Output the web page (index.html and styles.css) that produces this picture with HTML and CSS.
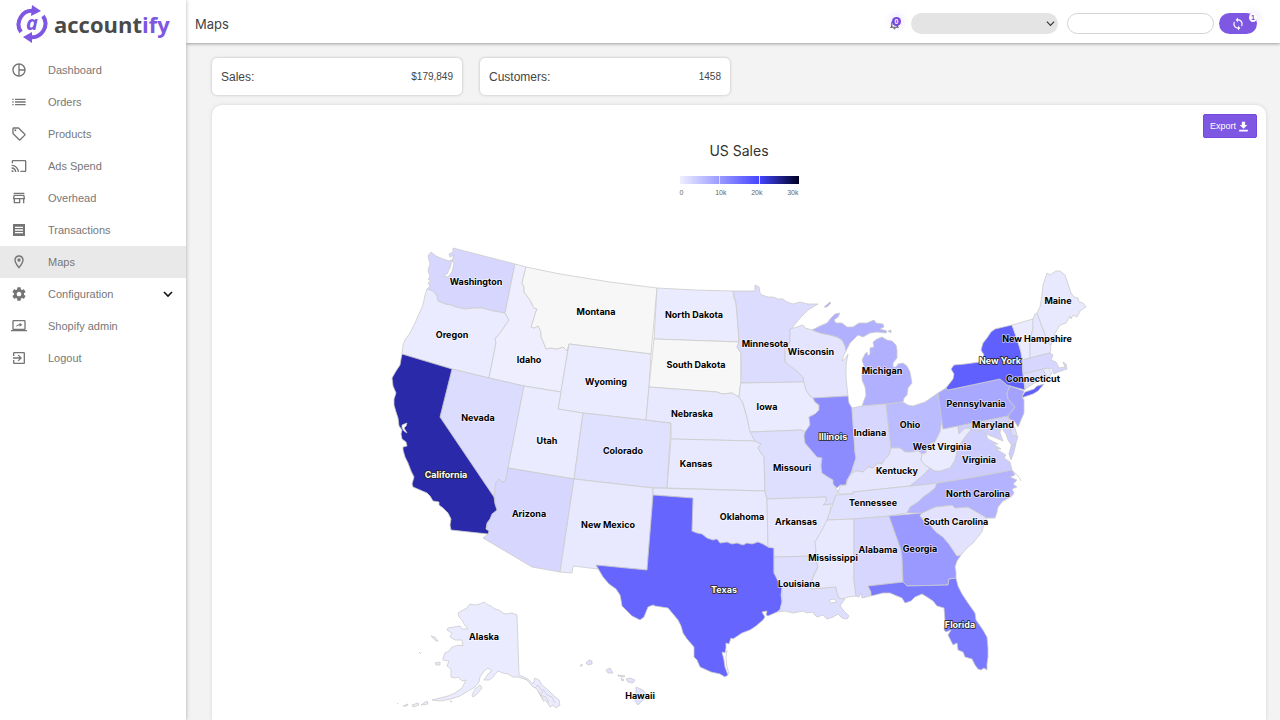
FILE: index.html
```html
<!DOCTYPE html>
<html lang="en">
<head>
    <meta charset="UTF-8" />
    <meta name="viewport" content="width=device-width, initial-scale=1.0" />
    <title>Accountify - Maps</title>
    <link rel="stylesheet" href="styles.css">
</head>
<body>
    <div class="app">
        <aside class="sidebar">
            <a class="logo" href="#">
                <svg class="logo-mark" viewBox="0 0 32 40">
                    <path class="logo-arc" d="M5 28A13.5 13.5 0 0 1 18 7M27 12A13.5 13.5 0 0 1 14 33" />
                    <path d="M16 1L25 7L15 12ZM16 28L7 33L16 39Z" />
                    <text x="16" y="26">a</text>
                </svg>
                <span class="logo-text">account<span>ify</span></span>
            </a>
            <nav class="menu">
                <a href="#"><svg viewBox="0 0 24 24"><path d="M12 2C6.48 2 2 6.48 2 12s4.48 10 10 10 10-4.48 10-10S17.52 2 12 2zm1 2.07c3.61.45 6.48 3.33 6.93 6.93H13V4.07zM4 12c0-4.06 3.07-7.44 7-7.93v15.87c-3.93-.5-7-3.88-7-7.94zm9 7.93V13h6.93c-.45 3.61-3.32 6.48-6.93 6.93z" /></svg>Dashboard</a>
                <a href="#"><svg viewBox="0 0 24 24"><path d="M2 13h2v-2H2v2zm0 4h2v-2H2v2zm0-8h2V7H2v2zm4 4h16v-2H6v2zm0 4h16v-2H6v2zM6 7v2h16V7H6z" /></svg>Orders</a>
                <a href="#"><svg viewBox="0 0 24 24"><path d="M21.41 11.58l-9-9C12.05 2.22 11.55 2 11 2H4c-1.1 0-2 .9-2 2v7c0 .55.22 1.05.59 1.42l9 9c.36.36.86.58 1.41.58s1.05-.22 1.41-.59l7-7c.37-.36.59-.86.59-1.41s-.23-1.06-.59-1.42zM13 20.01L4 11V4h7l9 9-7 7.01z" /><circle cx="6.5" cy="6.5" r="1.5" /></svg>Products</a>
                <a href="#"><svg viewBox="0 0 24 24"><path d="M21 3H3c-1.1 0-2 .9-2 2v3h2V5h18v14h-7v2h7c1.1 0 2-.9 2-2V5c0-1.1-.9-2-2-2zM1 18v3h3c0-1.66-1.34-3-3-3zm0-4v2c2.76 0 5 2.24 5 5h2c0-3.87-3.13-7-7-7zm0-4v2c4.97 0 9 4.03 9 9h2c0-6.08-4.93-11-11-11z" /></svg>Ads Spend</a>
                <a href="#"><svg viewBox="0 0 24 24"><path d="M18.36 9l.6 3H5.04l.6-3h12.72M20 4H4v2h16V4zm0 3H4l-1 5v2h1v6h10v-6h4v6h2v-6h1v-2l-1-5zM6 18v-4h6v4H6z" /></svg>Overhead</a>
                <a href="#"><svg viewBox="0 0 24 24"><path fill-rule="evenodd" d="M3 3h18v18H3zM6 7v2h12V7zM6 11v2h12v-2zM6 15v2h12v-2z" /></svg>Transactions</a>
                <a href="#" class="active"><svg viewBox="0 0 24 24"><path d="M12 2C8.13 2 5 5.13 5 9c0 5.25 7 13 7 13s7-7.75 7-13c0-3.87-3.13-7-7-7zM7 9c0-2.76 2.24-5 5-5s5 2.24 5 5c0 2.88-2.88 7.19-5 9.88C9.92 16.21 7 11.85 7 9z" /><circle cx="12" cy="9" r="2.5" /></svg>Maps</a>
                <a href="#"><svg viewBox="0 0 24 24"><path d="M19.43 12.98c.04-.32.07-.64.07-.98s-.03-.66-.07-.98l2.11-1.65c.19-.15.24-.42.12-.64l-2-3.46c-.12-.22-.39-.3-.61-.22l-2.49 1c-.52-.4-1.08-.73-1.69-.98l-.38-2.65C14.46 2.18 14.25 2 14 2h-4c-.25 0-.46.18-.49.42l-.38 2.65c-.61.25-1.17.59-1.69.98l-2.49-1c-.23-.09-.49 0-.61.22l-2 3.46c-.13.22-.07.49.12.64l2.11 1.65c-.04.32-.07.65-.07.98s.03.66.07.98l-2.11 1.65c-.19.15-.24.42-.12.64l2 3.46c.12.22.39.3.61.22l2.49-1c.52.4 1.08.73 1.69.98l.38 2.65c.03.24.24.42.49.42h4c.25 0 .46-.18.49-.42l.38-2.65c.61-.25 1.17-.59 1.69-.98l2.49 1c.23.09.49 0 .61-.22l2-3.46c.12-.22.07-.49-.12-.64l-2.11-1.65zM12 15.5c-1.93 0-3.5-1.57-3.5-3.5s1.57-3.5 3.5-3.5 3.5 1.57 3.5 3.5-1.57 3.5-3.5 3.5z" /></svg>Configuration<svg class="chevron" viewBox="0 0 10 10"><path d="M1 3l4 4 4-4" /></svg></a>
                <a href="#"><svg viewBox="0 0 24 24"><path d="M20 18c1.1 0 2-.9 2-2V5c0-1.1-.9-2-2-2H4c-1.1 0-2 .9-2 2v11c0 1.1.9 2 2 2H0v2h24v-2h-4zM4 5h16v11H4V5zM13 7v2c-3.9.5-5.4 3.2-6 5 1.4-1.9 3.2-2.7 6-2.7v2l4-3.2z" /></svg>Shopify admin</a>
                <a href="#"><svg viewBox="0 0 24 24"><path d="M10.09 15.59L11.5 17l5-5-5-5-1.41 1.41L12.67 11H3v2h9.67l-2.58 2.59zM19 3H5c-1.11 0-2 .9-2 2v4h2V5h14v14H5v-4H3v4c0 1.1.89 2 2 2h14c1.1 0 2-.9 2-2V5c0-1.1-.9-2-2-2z" /></svg>Logout</a>
            </nav>
        </aside>

        <div class="page">
            <header class="topbar">
                <h1>Maps</h1>
                <button class="bell" aria-label="Notifications">
                    <svg viewBox="0 0 24 24"><path d="M12 22c1.1 0 2-.9 2-2h-4c0 1.1.9 2 2 2zm6-6v-5c0-3.07-1.63-5.64-4.5-6.32V4c0-.83-.67-1.5-1.5-1.5s-1.5.67-1.5 1.5v.68C7.64 5.36 6 7.92 6 11v5l-2 2v1h16v-1l-2-2zm-2 1H8v-6c0-2.48 1.51-4.5 4-4.5s4 2.02 4 4.5v6z" /></svg>
                    <span class="badge">0</span>
                </button>
                <div class="select-wrap">
                    <select aria-label="Store"><option></option></select>
                    <svg viewBox="0 0 10 10"><path d="M1 3l4 4 4-4" /></svg>
                </div>
                <input class="dates" type="text" aria-label="Date range">
                <button class="sync" aria-label="Sync">
                    <svg viewBox="0 0 24 24"><path d="M12 4V1L8 5l4 4V6c3.31 0 6 2.69 6 6 0 1.01-.25 1.97-.7 2.8l1.46 1.46C19.54 15.03 20 13.57 20 12c0-4.42-3.58-8-8-8zm0 14c-3.31 0-6-2.69-6-6 0-1.01.25-1.97.7-2.8L5.24 7.74C4.46 8.97 4 10.43 4 12c0 4.42 3.58 8 8 8v3l4-4-4-4v3z" /></svg>
                    <span class="badge light">1</span>
                </button>
            </header>

            <main class="content">
                <div class="stats">
                    <div class="stat"><span>Sales:</span><b>$179,849</b></div>
                    <div class="stat"><span>Customers:</span><b>1458</b></div>
                </div>

                <section class="card">
                    <button class="export">Export
                        <svg viewBox="0 0 24 24"><path d="M19 9h-4V3H9v6H5l7 7 7-7zM4 18v3h16v-3H4z" /></svg>
                    </button>
                    <h2>US Sales</h2>
                    <div class="legend">
                        <div class="legend-bar"><i></i><i></i><i></i></div>
                        <div class="legend-labels"><span>0</span><span>10k</span><span>20k</span><span>30k</span></div>
                    </div>

                    <svg class="map" viewBox="212 200 1054 515" role="img" aria-label="Sales by state">
                        <g class="states">
                            <!-- west -->
                            <path fill="#d6d6ff" d="M453 248L484 256L515 264L510 289L505 313L493 311L482 308L473 308L465 309L456 307L451 305L445 304L438 301L437 296L433 291L427 289L430 286L428 283L431 281L428 279L430 277L428 270L430 264L428 256L431 252L436 256L443 259L449 261L452 260L450 268L447 274L443 276L448 277L452 272L454 263L452 261L454 255L450 257L449 254L453 252Z" />
                            <path fill="#ebebff" d="M427 289L433 291L437 296L438 301L445 304L451 305L456 307L465 309L473 308L482 308L493 311L505 313L509 320L500 333L495 339L496 343L489 378L452 369L402 354L403 345L405 340L410 333L415 323L419 314L423 305L425 295Z" />
                            <path fill="#eeeeff" d="M515 264L526 267L522 283L524 287L524 292L530 300L534 308L537 309L535 314L534 318L531 327L534 328L538 326L541 332L541 337L543 341L546 349L550 348L557 349L563 347L567 351L569 344L561 392L524 386L489 378L496 343L495 339L500 333L509 320L505 313Z" />
                            <path fill="#f7f7f7" d="M526 267L560 274L610 282L657 288L651 354L569 344L567 351L563 347L557 349L550 348L546 349L543 341L541 337L541 332L538 326L534 328L531 327L534 318L535 314L537 309L534 308L530 300L524 292L524 287L522 283Z" />
                            <path fill="#ebebff" d="M569 344L651 354L649 387L646 420L583 413L558 409Z" />
                            <path fill="#dcdcff" d="M452 369L489 378L524 386L508 468L507 475L505 482L502 482L499 479L496 482L494 497L440 417Z" />
                            <path fill="#ebebff" d="M524 386L561 392L558 409L583 413L574 479L508 468Z" />
                            <path fill="#d6d6ff" d="M508 468L574 479L560 572L532 567L483 538L488 534L487 523L492 514L497 510L494 497L496 482L499 479L502 482L505 482L507 475Z" />
                            <path fill="#e0e0ff" d="M583 413L646 420L671 423L667 488L653 488L574 479Z" />
                            <path fill="#e8e8ff" d="M574 479L653 488L653 495L647 570L596 565L598 569L573 566L572 573L560 572Z" />
                            <path fill="#2929a9" d="M402 354L452 369L440 417L494 497L495 504L497 510L492 514L490 519L487 523L486 529L489 531L488 534L451 530L450 525L451 519L448 513L443 508L439 505L439 502L433 501L430 496L427 493L420 490L413 487L412 484L414 477L411 471L408 463L405 457L403 450L403 447L407 446L406 442L402 439L401 434L402 430L399 426L398 418L396 412L394 405L394 399L396 393L393 386L392 378L396 371L400 365L401 359Z" />
                            <path class="water" d="M402 425L407 423L406 426L404 428L407 433L404 431L402 428Z" />
                            <!-- plains -->
                            <path fill="#ebebff" d="M657 288L695 290L733 291L734 299L736 303L737 315L738 327L739 342L654 339Z" />
                            <path fill="#f7f7f7" d="M654 339L739 342L737 347L741 353L741 383L740 387L739 397L732 393L722 394L717 392L649 387Z" />
                            <path fill="#e8e8ff" d="M649 387L717 392L722 394L732 393L739 397L743 403L745 411L747 417L749 427L752 435L755 441L671 439L671 423L646 420Z" />
                            <path fill="#e8e8ff" d="M671 439L755 441L761 444L758 448L761 453L764 457L765 491L667 488Z" />
                            <path fill="#e8e8ff" d="M653 488L765 491L767 499L768 547L763 544L758 542L752 544L747 543L743 545L737 543L732 544L727 542L720 543L717 539L713 540L707 538L702 534L697 533L692 531L693 498L653 495Z" />
                            <path fill="#6666ff" d="M653 495L693 498L692 531L697 533L702 534L707 538L713 540L717 539L720 543L727 542L732 544L737 543L743 545L747 543L752 544L758 542L763 544L768 547L774 548L774 573L778 578L779 583L782 588L781 595L782 602L780 610L777 612L768 616L766 615L767 611L762 612L765 617L763 620L756 626L750 630L742 633L733 639L731 638L729 644L726 643L726 648L725 653L722 652L724 660L725 667L728 675L725 677L720 674L711 672L700 667L697 660L694 657L694 647L687 639L683 633L681 626L678 620L673 614L668 608L655 606L653 605L648 607L644 617L640 620L632 616L622 606L621 600L620 595L616 589L609 584L603 577L596 565L647 570Z" />
                            <path class="thin" d="M727 650L726 658L727 667L729 674" />
                            <path fill="#dcdcff" d="M733 291L755 291L755 285L759 287L760 293L762 295L768 297L773 297L778 299L783 299L787 302L793 304L800 302L808 304L818 304L808 310L800 318L792 328L790 329L790 343L785 348L785 362L791 366L798 372L803 377L804 382L741 383L741 353L737 347L739 342L738 327L736 303Z" />
                            <path fill="#ebebff" d="M741 383L804 382L806 390L810 396L813 398L815 402L819 405L819 410L815 414L809 417L810 425L805 432L802 430L750 432L749 427L747 417L743 403L739 397L740 387Z" />
                            <path fill="#dedeff" d="M750 432L802 430L805 434L805 443L811 450L817 457L822 458L821 466L822 473L828 477L833 480L835 487L838 491L836 495L834 499L833 504L823 505L826 502L826 497L767 499L765 491L764 457L761 453L758 448L761 444L755 441Z" />
                            <path fill="#e6e6ff" d="M767 499L826 497L826 502L823 505L831 504L830 512L827 520L825 525L822 530L819 537L815 542L816 550L815 556L774 557L774 548L768 547Z" />
                            <path fill="#dedeff" d="M774 557L815 556L818 567L814 574L812 580L811 589L836 587L837 593L839 598L845 599L842 603L840 606L844 611L849 616L847 619L842 618L838 614L833 617L827 619L823 615L817 617L812 612L807 613L803 611L793 613L785 611L777 612L780 610L782 602L782 588L779 583L774 573Z" />
                            <path class="water" d="M829 600L834 599L837 602L831 603Z" />
                            <!-- great lakes -->
                            <path fill="#e4e4ff" d="M790 329L797 327L803 325L805 328L812 330L820 333L830 335L837 337L842 340L845 346L846 351L843 357L842 361L845 359L848 354L846 365L846 377L847 387L848 396L813 398L810 396L806 390L804 382L803 377L798 372L785 362L785 348L790 343Z" />
                            <path fill="#b0b0ff" d="M812 330L820 326L827 323L831 318L835 314L840 313L838 317L834 320L836 323L842 323L847 327L853 327L859 323L867 323L874 320L876 323L883 324L884 327L880 329L887 331L886 333L877 332L870 333L863 337L858 335L853 340L850 343L846 351L845 346L842 340L837 337L830 335L820 333Z" />
                            <path fill="#b0b0ff" d="M824 307L830 302L831 303L827 307ZM888 331L891 330L891 333Z" />
                            <path fill="#b0b0ff" d="M862 406L866 395L865 387L862 380L862 373L864 366L862 360L865 354L867 352L868 356L870 354L870 348L874 347L873 342L877 339L882 337L887 340L892 341L896 345L897 350L897 358L893 363L893 367L896 367L898 364L903 363L907 366L910 372L912 383L908 388L907 395L904 398L903 402L886 404Z" />
                            <path fill="#8c8cff" d="M813 398L848 396L849 403L852 408L855 452L856 458L853 467L851 473L847 480L846 485L840 485L837 488L833 484L833 480L828 477L822 473L821 466L822 458L817 457L811 450L805 443L804 436L805 432L810 425L809 417L815 414L819 410L819 405L815 402Z" />
                            <path fill="#d6d6ff" d="M852 408L862 406L886 404L891 448L889 455L885 459L882 464L878 463L873 468L868 467L863 472L857 471L852 473L853 467L856 458L855 452Z" />
                            <path fill="#bbbbff" d="M886 404L903 402L908 405L913 406L925 402L938 393L943 420L943 425L940 432L935 442L931 443L927 447L926 453L922 454L918 451L912 452L905 452L900 448L891 448Z" />
                            <!-- south -->
                            <path fill="#e6e6ff" d="M838 494L840 486L846 485L848 479L852 473L857 471L863 472L868 467L873 468L878 463L882 464L885 459L889 455L891 448L900 448L905 452L912 452L918 451L922 454L921 460L925 465L930 468L921 477L910 486L853 492L853 494Z" />
                            <path fill="#e0e0ff" d="M836 495L853 494L853 492L910 486L937 483L935 488L929 493L923 497L918 502L910 507L907 513L889 516L854 519L827 520L830 512Z" />
                            <path fill="#e8e8ff" d="M827 520L854 519L854 580L856 596L848 597L842 599L839 598L837 593L836 587L811 589L812 580L818 567L815 556L816 550L815 542L822 530Z" />
                            <path fill="#d6d6ff" d="M854 519L889 516L901 550L902 557L902 570L903 582L868 586L871 592L870 596L862 598L861 593L859 597L856 596L854 580Z" />
                            <path fill="#9999ff" d="M889 516L922 513L920 516L924 521L930 525L936 532L943 537L949 544L953 550L957 556L961 555L957 561L955 567L956 572L956 578L949 579L948 585L907 586L903 582L902 557L901 550Z" />
                            <path fill="#7a7aff" d="M868 586L903 582L907 586L948 585L949 579L956 578L958 586L962 594L968 603L975 613L976 620L983 630L987 637L988 648L988 657L987 664L987 670L984 668L981 670L978 669L975 665L972 659L965 657L963 652L958 650L957 643L953 645L948 635L951 630L946 632L944 630L945 621L944 608L937 606L933 601L927 597L922 594L915 597L911 601L905 603L902 598L897 596L890 593L883 593L871 596L871 592Z" />
                            <path fill="#e2e2ff" d="M922 513L935 507L952 505L955 508L968 507L987 518L984 524L982 532L977 538L973 543L967 548L961 555L957 556L953 550L949 544L943 537L936 532L930 525L920 516Z" />
                            <path fill="#b3b3ff" d="M937 483L975 477L1012 470L1015 475L1010 477L1017 480L1013 484L1017 487L1012 489L1014 493L1011 497L1003 501L998 507L997 512L995 518L987 518L968 507L955 508L952 505L935 507L922 513L907 513L910 507L918 502L923 497L929 493L935 488Z" />
                            <path fill="#ccccff" d="M972 428L976 432L981 430L986 434L988 439L998 444L993 444L1001 449L996 449L1006 455L1004 458L1010 462L1012 470L975 477L937 483L910 486L921 477L930 468L935 471L940 471L950 468L955 460L958 447L965 437Z" />
                            <path fill="#ebebff" d="M942 420L943 429L958 426L959 434L965 428L972 428L965 437L958 447L955 460L950 468L940 471L935 471L930 468L925 465L921 460L922 454L926 453L927 447L931 443L935 442L940 432Z" />
                            <path fill="#d0d0ff" d="M958 426L1008 416L1012 436L1018 436L1016 443L1012 446L1008 440L1006 434L1003 430L1005 423L1001 427L1000 433L1003 441L996 438L986 434L981 430L976 432L972 428L965 428L959 434Z" />
                            <path fill="#ccccff" d="M1011 446L1016 443L1014 452L1011 460L1009 454Z" />
                            <path class="thin" d="M1013 471L1019 477L1021 481" />
                            <!-- northeast -->
                            <path fill="#a8a8ff" d="M938 393L946 388L948 390L1000 379L1007 385L1010 386L1007 393L1008 399L1015 407L1008 416L943 429Z" />
                            <path fill="#6060ff" d="M946 388L953 379L954 374L951 369L954 365L965 364L980 362L984 355L981 350L983 343L987 338L991 332L995 329L1012 325L1015 333L1018 342L1021 352L1022 360L1023 373L1025 390L1010 386L1007 385L1000 379L948 390Z" />
                            <path fill="#6060ff" d="M1021 398L1025 392L1034 389L1037 386L1044 384L1038 391L1033 394Z" />
                            <path fill="#a3a3ff" d="M1010 386L1024 391L1022 397L1024 400L1024 413L1021 420L1018 427L1015 422L1009 419L1008 416L1015 407L1008 399L1007 393Z" />
                            <path fill="#dcdcff" d="M1008 416L1010 421L1015 428L1017 435L1012 436Z" />
                            <path fill="#ebebff" d="M1012 325L1033 319L1033 328L1030 340L1030 358L1022 360L1021 352L1018 342Z" />
                            <path fill="#e6e6ff" d="M1033 319L1035 314L1037 313L1047 340L1051 347L1050 353L1030 358L1030 340L1033 328Z" />
                            <path fill="#e8e8ff" d="M1037 313L1040 307L1042 295L1043 285L1047 273L1050 275L1056 271L1060 271L1065 275L1071 293L1074 297L1078 298L1079 302L1083 303L1086 307L1080 311L1077 317L1073 315L1071 319L1070 316L1066 323L1060 325L1055 333L1051 345L1047 340Z" />
                            <path fill="#d6d6ff" d="M1022 360L1030 358L1050 353L1053 355L1051 360L1056 362L1059 368L1065 367L1063 362L1066 364L1067 369L1058 372L1054 374L1052 369L1048 368L1023 374Z" />
                            <path fill="#dcdcff" d="M1023 374L1043 369L1046 376L1033 384L1025 389Z" />
                            <path fill="#e8e8ff" d="M1043 369L1048 368L1052 373L1049 377L1046 376Z" />
                            <!-- alaska and hawaii -->
                            <path fill="#ebebff" d="M484 602L480 604L475 605L470 604L467 608L463 610L458 613L459 617L462 620L464 624L468 629L462 629L460 626L448 628L447 630L452 633L450 637L455 640L462 640L463 646L459 645L452 647L449 651L445 653L443 658L443 660L449 661L447 666L451 669L451 677L455 678L458 677L462 681L466 680L462 688L455 693L448 696L440 698L432 700L440 701L451 699L460 696L468 691L475 687L479 682L480 677L484 671L488 668L492 671L488 674L484 680L489 680L492 678L498 671L503 673L508 674L513 677L518 677L527 680L532 686L537 689L542 698L547 702L550 707L553 705L556 708L560 705L559 700L552 694L548 690L542 685L539 680L535 678L533 684L529 680L524 677L519 675L517 615L512 613L506 614L503 613L499 610L495 609L491 606L488 605Z" />
                            <path fill="#ebebff" d="M472 695L475 689L480 685L482 688L477 694L473 697ZM435 663L440 662L440 665L436 665ZM431 636L435 637L438 641L436 641ZM421 705L427 701L428 704ZM412 705L418 703L419 705L413 707ZM403 706L408 704L407 706ZM397 703L398 704ZM419 652L421 654ZM450 701L452 702Z" />
                            <path class="thin" d="M535 688L538 685L543 692L540 695L546 697L549 703M543 689L547 695L552 697L555 703M538 691L544 702" />
                            <path fill="#e0e0ff" d="M580 666L582 664L582 666ZM586 663L589 660L592 661L592 664L588 665ZM606 670L610 668L613 673L608 673ZM618 675L625 676L624 677L618 676ZM621 678L624 680L622 681ZM626 679L630 678L635 680L633 683L628 682ZM636 687L643 690L647 695L643 700L638 705L635 701L636 695Z" />
                        </g>

                        <g class="labels">
                            <text x="476" y="285">Washington</text>
                            <text x="452" y="338">Oregon</text>
                            <text x="529" y="363">Idaho</text>
                            <text x="596" y="315">Montana</text>
                            <text x="606" y="385">Wyoming</text>
                            <text class="on-dark" x="446" y="478">California</text>
                            <text x="478" y="421">Nevada</text>
                            <text x="547" y="444">Utah</text>
                            <text x="529" y="517">Arizona</text>
                            <text x="608" y="528">New Mexico</text>
                            <text x="623" y="454">Colorado</text>
                            <text x="694" y="318">North Dakota</text>
                            <text x="696" y="368">South Dakota</text>
                            <text x="692" y="417">Nebraska</text>
                            <text x="696" y="467">Kansas</text>
                            <text x="742" y="520">Oklahoma</text>
                            <text class="on-dark" x="724" y="593">Texas</text>
                            <text x="765" y="347">Minnesota</text>
                            <text x="767" y="410">Iowa</text>
                            <text x="792" y="471">Missouri</text>
                            <text x="796" y="525">Arkansas</text>
                            <text x="799" y="587">Louisiana</text>
                            <text x="833" y="561">Mississippi</text>
                            <text x="811" y="355">Wisconsin</text>
                            <text class="on-dark" x="833" y="440">Illinois</text>
                            <text x="882" y="374">Michigan</text>
                            <text x="870" y="436">Indiana</text>
                            <text x="910" y="428">Ohio</text>
                            <text x="897" y="474">Kentucky</text>
                            <text x="873" y="506">Tennessee</text>
                            <text x="878" y="553">Alabama</text>
                            <text x="920" y="552">Georgia</text>
                            <text class="on-dark" x="960" y="628">Florida</text>
                            <text x="956" y="525">South Carolina</text>
                            <text x="978" y="497">North Carolina</text>
                            <text x="979" y="463">Virginia</text>
                            <text x="942" y="450">West Virginia</text>
                            <text x="993" y="428">Maryland</text>
                            <text x="976" y="407">Pennsylvania</text>
                            <text class="on-dark" x="1000" y="364">New York</text>
                            <text x="1033" y="382">Connecticut</text>
                            <text x="1037" y="342">New Hampshire</text>
                            <text x="1058" y="304">Maine</text>
                            <text x="484" y="640">Alaska</text>
                            <text x="640" y="699">Hawaii</text>
                        </g>
                    </svg>
                </section>
            </main>
        </div>
    </div>
</body>
</html>
```
FILE: styles.css
```css
* {
    box-sizing: border-box;
}

body {
    margin: 0;
    background-color: #f3f3f3;
    color: #444;
    font-family: "Liberation Sans", Arial, sans-serif;
}

button {
    padding: 0;
    border: 0;
    font-family: inherit;
    cursor: pointer;
}

.app {
    display: flex;
    min-height: 100vh;
}

/* sidebar */
.sidebar {
    position: relative;
    flex: 0 0 186px;
    background: #fff;
    box-shadow: 0 0 4px rgba(0, 0, 0, 0.3);
}

.logo {
    display: flex;
    align-items: center;
    gap: 6px;
    height: 54px;
    padding: 0 0 6px 16px;
    text-decoration: none;
}

.logo-mark {
    width: 32px;
    height: 40px;
    fill: #7e57e2;
}

.logo-arc {
    fill: none;
    stroke: #7e57e2;
    stroke-width: 4;
}

.logo-mark text {
    font: italic bold 20px "Open Sans", sans-serif;
    text-anchor: middle;
}

.logo-text {
    color: #4a4a4a;
    font: bold 22px "Open Sans", sans-serif;
}

.logo-text span {
    color: #7e57e2;
}

.menu a {
    display: flex;
    align-items: center;
    gap: 21px;
    height: 32px;
    padding: 0 13px 0 11px;
    color: #777;
    font-size: 11px;
    text-decoration: none;
}

.menu a.active {
    background: #e9e9e9;
}

.menu svg {
    width: 16px;
    height: 16px;
    fill: #757575;
}

.menu .chevron {
    width: 10px;
    height: 10px;
    margin-left: auto;
    fill: none;
    stroke: #111;
    stroke-width: 1.6;
}

/* top bar */
.page {
    display: flex;
    flex-direction: column;
    flex: 1;
    min-width: 0;
}

.topbar {
    display: flex;
    align-items: center;
    height: 43px;
    padding: 4px 23px 0 9px;
    background: #fff;
    box-shadow: 0 1px 3px rgba(0, 0, 0, 0.35);
}

.topbar h1 {
    margin: 0 auto 0 0;
    color: #444;
    font: 13px Inter, sans-serif;
}

.bell {
    position: relative;
    width: 13px;
    height: 14px;
    margin-right: 10px;
    background: none;
}

.bell svg {
    display: block;
    width: 13px;
    height: 14px;
    fill: #555;
}

.badge {
    position: absolute;
    top: 0;
    right: 0;
    width: 9px;
    height: 9px;
    border-radius: 50%;
    background: #7448dd;
    box-shadow: 0 0 8px rgba(116, 72, 221, 0.3);
    color: #fff;
    font-size: 7px;
    font-weight: bold;
    line-height: 9px;
    text-align: center;
}

.badge.light {
    width: 8px;
    background: #fff;
    color: #7448dd;
}

.select-wrap {
    position: relative;
    width: 147px;
    height: 21px;
    margin-right: 9px;
}

.select-wrap select {
    width: 100%;
    height: 100%;
    border: 0;
    border-radius: 11px;
    background: #e4e4e4;
    appearance: none;
}

.select-wrap svg {
    position: absolute;
    top: 6px;
    right: 3px;
    width: 9px;
    height: 9px;
    fill: none;
    stroke: #333;
    stroke-width: 1.3;
    pointer-events: none;
}

.dates {
    width: 147px;
    height: 21px;
    margin-right: 5px;
    border: 1px solid #d3d3d3;
    border-radius: 11px;
    background: #fff;
}

.sync {
    position: relative;
    width: 38px;
    height: 21px;
    border-radius: 11px;
    background: #7e57e2;
}

.sync svg {
    display: block;
    width: 14px;
    height: 14px;
    margin: 0 auto;
    fill: #fff;
}

/* content */
.content {
    display: flex;
    flex-direction: column;
    flex: 1;
    gap: 10px;
    padding: 15px 14px 0 26px;
}

.stats {
    display: grid;
    grid-template-columns: repeat(4, 1fr);
    gap: 18px;
}

.stat {
    display: flex;
    align-items: center;
    justify-content: space-between;
    height: 37px;
    padding: 0 9px;
    border-radius: 5px;
    background: #fff;
    box-shadow: 0 0 3px rgba(0, 0, 0, 0.25);
    font-size: 12px;
}

.stat b {
    font-size: 10px;
    font-weight: normal;
}

.card {
    display: flex;
    flex-direction: column;
    align-items: center;
    flex: 1;
    border-radius: 10px 10px 0 0;
    background: #fff;
    box-shadow: 0 0 4px rgba(0, 0, 0, 0.12);
}

.export {
    display: flex;
    align-items: center;
    align-self: flex-end;
    justify-content: center;
    gap: 1px;
    width: 54px;
    height: 24px;
    margin: 9px 9px 0 0;
    border: 1px solid #7448dd;
    border-radius: 2px;
    background: #7e57e2;
    color: #fff;
    font-size: 9px;
}

.export svg {
    width: 13px;
    height: 13px;
    fill: #fff;
}

.card h2 {
    margin: 3px 0 0;
    color: #333;
    font: 14px/20px Inter, sans-serif;
}

.legend {
    width: 119px;
    height: 24px;
    margin-top: 15px;
}

.legend-bar {
    display: grid;
    grid-template-columns: repeat(3, 1fr);
    height: 8px;
    background: linear-gradient(to right, #efefff, #4444ff 67%, #000022);
}

.legend-bar i + i {
    border-left: 1px solid #ddd;
}

.legend-labels {
    display: flex;
    justify-content: space-between;
    margin-top: 5px;
    color: #666;
    font-size: 7px;
}

.legend-labels span {
    min-width: 11px;
}

/* map */
.map {
    display: block;
    width: 100%;
}

.states path {
    stroke: #ccc;
    stroke-width: 0.8;
    stroke-linejoin: round;
}

.states .water {
    fill: #fff;
}

.states .thin {
    fill: none;
}

.labels text {
    fill: #000;
    stroke: rgba(255, 255, 255, 0.6);
    stroke-width: 1.5;
    paint-order: stroke;
    font: bold 9px Inter, sans-serif;
    text-anchor: middle;
}

.labels .on-dark {
    fill: #fff;
    stroke: #222;
}
```
